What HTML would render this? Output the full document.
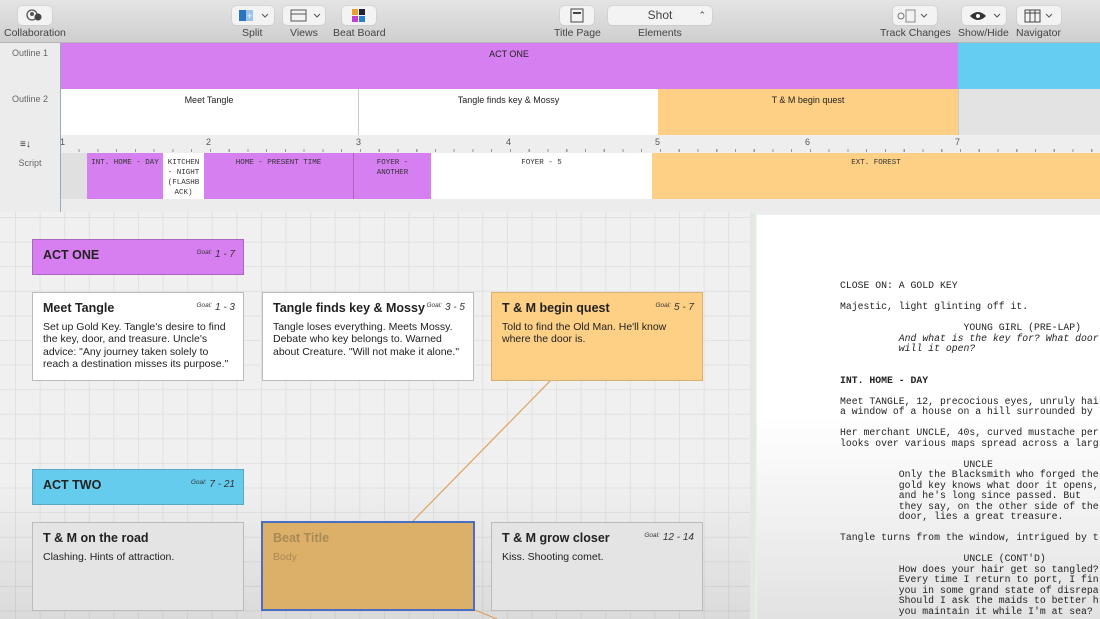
<!DOCTYPE html>
<html><head><meta charset="utf-8"><style>
*{margin:0;padding:0;box-sizing:border-box}
body{width:1100px;height:619px;overflow:hidden;position:relative;font-family:"Liberation Sans",sans-serif;background:#eee}
.abs{position:absolute}
.tb{left:0;top:0;width:1100px;height:43px;background:linear-gradient(#e4e4e4,#cfcfcf);border-bottom:1px solid #b5b5b5}
.btn{position:absolute;top:6px;height:19px;background:#f3f3f3;border-radius:4px;box-shadow:0 0 1px #999}
.lbl{position:absolute;top:27px;font-size:10.5px;color:#444;white-space:nowrap}
.rowlbl{position:absolute;left:0;width:60px;font-size:9px;color:#666;text-align:center}
.seg{position:absolute;font-size:9px;color:#222;text-align:center;padding-top:6px}
.sc{position:absolute;top:153px;height:46px;font-family:"Liberation Mono",monospace;font-size:7.5px;color:#333;text-align:center;padding-top:5px;line-height:10px}
.card{position:absolute;border:1px solid #bbb;background:#fff;padding:8px 10px;font-size:10.5px;line-height:12.5px;color:#222}
.card b{display:block;font-size:12.5px;margin-bottom:6px;margin-top:1px}
.goal{position:absolute;right:8px;top:7px;font-size:10px;font-style:italic;color:#333}
.goal small{font-size:6.5px;vertical-align:3px;margin-right:3px}
.scr{font-family:"Liberation Mono",monospace;font-size:9.8px;line-height:10.5px;color:#222;white-space:pre;position:absolute}
</style></head><body>
<div class="abs tb"></div>
<div class="btn" style="left:18px;width:34px"><svg width="34" height="19"><circle cx="14" cy="9" r="5" fill="none" stroke="#555" stroke-width="1.3"/><circle cx="14" cy="8" r="2" fill="#555"/><circle cx="20" cy="11" r="3.5" fill="#444"/></svg></div>
<div class="lbl" style="left:4px">Collaboration</div>
<div class="btn" style="left:232px;width:42px"><svg width="42" height="19"><rect x="7" y="4" width="7" height="11" fill="#2a74c0"/><rect x="14" y="4" width="7" height="11" fill="#9cc4ea"/><text x="15" y="13" font-size="9" fill="#fff">+</text><path d="M30 8l3 3 3-3" stroke="#555" fill="none"/></svg></div>
<div class="lbl" style="left:242px">Split</div>
<div class="btn" style="left:283px;width:42px"><svg width="42" height="19"><rect x="8" y="4" width="15" height="11" fill="none" stroke="#555"/><line x1="8" y1="8" x2="23" y2="8" stroke="#555"/><path d="M31 8l3 3 3-3" stroke="#555" fill="none"/></svg></div>
<div class="lbl" style="left:290px">Views</div>
<div class="btn" style="left:342px;width:34px"><svg width="34" height="19"><rect x="10" y="3" width="6" height="6" fill="#e8a030"/><rect x="17" y="3" width="6" height="6" fill="#223"/><rect x="10" y="10" width="6" height="6" fill="#c040d0"/><rect x="17" y="10" width="6" height="6" fill="#2a80d0"/></svg></div>
<div class="lbl" style="left:333px">Beat Board</div>
<div class="btn" style="left:560px;width:34px"><svg width="34" height="19"><rect x="11" y="3" width="12" height="13" fill="none" stroke="#444"/><rect x="13" y="6" width="8" height="2" fill="#444"/></svg></div>
<div class="lbl" style="left:554px">Title Page</div>
<div class="btn" style="left:608px;width:104px;font-size:12px;color:#444;text-align:center;line-height:19px">Shot<span style="position:absolute;right:6px;font-size:9px">⌃</span></div>
<div class="lbl" style="left:638px">Elements</div>
<div class="btn" style="left:893px;width:44px"><svg width="44" height="19"><circle cx="8" cy="10" r="3" fill="none" stroke="#777"/><rect x="13" y="4" width="9" height="12" fill="none" stroke="#888"/><path d="M28 8l3 3 3-3" stroke="#555" fill="none"/></svg></div>
<div class="lbl" style="left:880px">Track Changes</div>
<div class="btn" style="left:962px;width:44px"><svg width="44" height="19"><path d="M8 10q8-8 16 0q-8 8-16 0z" fill="#333"/><circle cx="16" cy="10" r="2" fill="#fff"/><path d="M32 8l3 3 3-3" stroke="#555" fill="none"/></svg></div>
<div class="lbl" style="left:958px">Show/Hide</div>
<div class="btn" style="left:1017px;width:44px"><svg width="44" height="19"><rect x="8" y="4" width="15" height="12" fill="none" stroke="#444"/><path d="M13 4v12M18 4v12M8 7h15" stroke="#444"/><path d="M29 8l3 3 3-3" stroke="#555" fill="none"/></svg></div>
<div class="lbl" style="left:1016px">Navigator</div>

<div class="abs" style="left:0;top:43px;width:1100px;height:170px;background:#ececec"></div>
<div class="rowlbl" style="top:48px">Outline 1</div>
<div class="rowlbl" style="top:94px">Outline 2</div>
<div class="rowlbl" style="top:158px">Script</div>
<div class="abs" style="left:20px;top:139px;font-size:10px;color:#333">≡↓</div>
<div class="seg" style="left:60px;top:43px;width:898px;height:46px;background:#d67ff0">ACT ONE</div>
<div class="seg" style="left:958px;top:43px;width:142px;height:46px;background:#66cdf2"></div>
<div class="seg" style="left:60px;top:89px;width:299px;height:46px;background:#fff;border-right:1px solid #ccc">Meet Tangle</div>
<div class="seg" style="left:359px;top:89px;width:299px;height:46px;background:#fff">Tangle finds key &amp; Mossy</div>
<div class="seg" style="left:658px;top:89px;width:300px;height:46px;background:#fdd085">T &amp; M begin quest</div>
<div class="seg" style="left:958px;top:89px;width:142px;height:46px;background:#e3e3e3;border-left:1px solid #ccc"></div>
<div class="abs" style="left:60px;top:135px;width:1040px;height:18px;background:#eee;background-image:repeating-linear-gradient(90deg,#999 0 1px,transparent 1px 18.75px);background-size:100% 3px;background-repeat:no-repeat;background-position:0 14px"></div>
<div class="abs" style="left:60px;top:137px;font-size:9px;color:#555">1</div>
<div class="abs" style="left:206px;top:137px;font-size:9px;color:#555">2</div>
<div class="abs" style="left:356px;top:137px;font-size:9px;color:#555">3</div>
<div class="abs" style="left:506px;top:137px;font-size:9px;color:#555">4</div>
<div class="abs" style="left:655px;top:137px;font-size:9px;color:#555">5</div>
<div class="abs" style="left:805px;top:137px;font-size:9px;color:#555">6</div>
<div class="abs" style="left:955px;top:137px;font-size:9px;color:#555">7</div>
<div class="sc" style="left:60px;width:27px;background:#e0e0e0"></div>
<div class="sc" style="left:87px;width:76px;background:#d67ff0">INT. HOME - DAY</div>
<div class="sc" style="left:163px;width:41px;background:#fff">KITCHEN<br>- NIGHT<br>(FLASHB<br>ACK)</div>
<div class="sc" style="left:204px;width:149px;background:#d67ff0">HOME - PRESENT TIME</div>
<div class="sc" style="left:353px;width:78px;background:#d67ff0;border-left:1px solid #b060c0">FOYER -<br>ANOTHER</div>
<div class="sc" style="left:431px;width:221px;background:#fff">FOYER - 5</div>
<div class="sc" style="left:652px;width:448px;background:#fdd085">EXT. FOREST</div>
<div class="abs" style="left:60px;top:43px;width:1px;height:170px;background:#9ab"></div>

<div class="abs" style="left:0;top:212px;width:750px;height:407px;background:#f0f0f0;background-image:linear-gradient(90deg,#e1e1e1 1px,transparent 1px),linear-gradient(#e1e1e1 1px,transparent 1px);background-size:24.6px 24.6px;background-position:15px 5px"></div>
<div class="abs" style="left:0;top:480px;width:750px;height:139px;background:linear-gradient(rgba(0,0,0,0),rgba(0,0,0,0.09))"></div>
<svg class="abs" style="left:0;top:0" width="750" height="619"><line x1="551" y1="380" x2="413" y2="521" stroke="#e0a060" stroke-width="1.2"/><line x1="475" y1="610" x2="497" y2="619" stroke="#e0a060" stroke-width="1.2"/></svg>
<div class="card" style="left:32px;top:239px;width:212px;height:36px;background:#d77ff0;border-color:#a868c0"><b>ACT ONE</b><span class="goal"><small>Goal:</small>1 - 7</span></div>
<div class="card" style="left:32px;top:292px;width:212px;height:89px"><b>Meet Tangle</b>Set up Gold Key. Tangle's desire to find the key, door, and treasure. Uncle's advice: "Any journey taken solely to reach a destination misses its purpose."<span class="goal"><small>Goal:</small>1 - 3</span></div>
<div class="card" style="left:262px;top:292px;width:212px;height:89px"><b>Tangle finds key &amp; Mossy</b>Tangle loses everything. Meets Mossy. Debate who key belongs to. Warned about Creature. "Will not make it alone."<span class="goal"><small>Goal:</small>3 - 5</span></div>
<div class="card" style="left:491px;top:292px;width:212px;height:89px;background:#fdd085;border-color:#d8b070"><b>T &amp; M begin quest</b>Told to find the Old Man. He'll know where the door is.<span class="goal"><small>Goal:</small>5 - 7</span></div>
<div class="card" style="left:32px;top:469px;width:212px;height:36px;background:#66ccee;border-color:#5aa8c8"><b>ACT TWO</b><span class="goal"><small>Goal:</small>7 - 21</span></div>
<div class="card" style="left:32px;top:522px;width:212px;height:89px;background:#e4e4e4"><b>T &amp; M on the road</b>Clashing. Hints of attraction.</div>
<div class="card" style="left:261px;top:521px;width:214px;height:90px;background:#dcb068;border:2px solid #4a6fc0;color:#a88a58"><b>Beat Title</b>Body</div>
<div class="card" style="left:491px;top:522px;width:212px;height:89px;background:#e4e4e4"><b>T &amp; M grow closer</b>Kiss. Shooting comet.<span class="goal"><small>Goal:</small>12 - 14</span></div>

<div class="abs" style="left:750px;top:212px;width:6px;height:407px;background:#e6e6e6;border-right:1px solid #cfc"></div>
<div class="abs" style="left:757px;top:215px;width:343px;height:404px;background:linear-gradient(#fff 50%,#e2e2e2)"></div>
<div class="scr" style="left:840px;top:281px">CLOSE ON: A GOLD KEY

Majestic, light glinting off it.

                     YOUNG GIRL (PRE-LAP)
          <i>And what is the key for? What door
          will it open?</i>


<b>INT. HOME - DAY</b>

Meet TANGLE, 12, precocious eyes, unruly hair
a window of a house on a hill surrounded by

Her merchant UNCLE, 40s, curved mustache per
looks over various maps spread across a larg

                     UNCLE
          Only the Blacksmith who forged the
          gold key knows what door it opens,
          and he's long since passed. But
          they say, on the other side of the
          door, lies a great treasure.

Tangle turns from the window, intrigued by t

                     UNCLE (CONT'D)
          How does your hair get so tangled?
          Every time I return to port, I fin
          you in some grand state of disrepa
          Should I ask the maids to better h
          you maintain it while I'm at sea?</div>
</body></html>
